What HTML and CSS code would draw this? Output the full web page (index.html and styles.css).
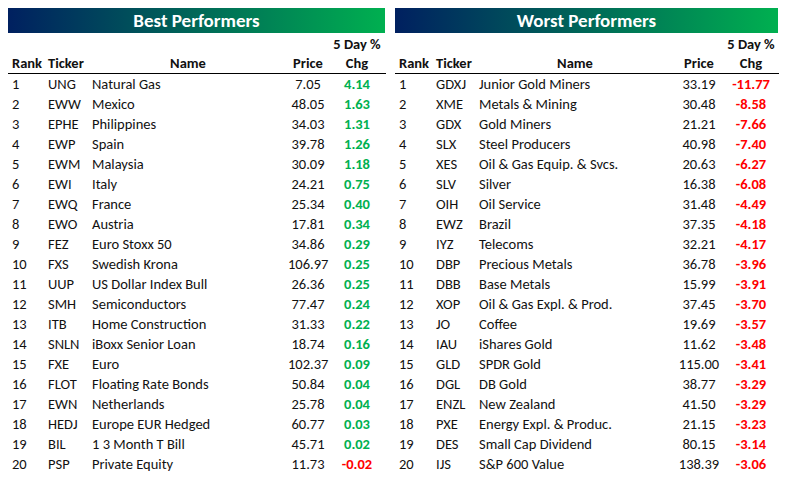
FILE: index.html
```html
<!DOCTYPE html>
<html>
<head>
<meta charset="utf-8">
<link rel="stylesheet" href="styles.css">
</head>
<body>
<div class="page">
  <section class="panel best">
    <h2 class="title">Best Performers</h2>
    <table class="tbl">
      <colgroup><col class="c-rank"><col class="c-tick"><col class="c-name"><col class="c-price"><col class="c-chg"></colgroup>
      <thead>
        <tr class="sup"><th></th><th></th><th></th><th></th><th class="chg">5 Day %</th></tr>
        <tr class="hdr"><th class="l">Rank</th><th class="l">Ticker</th><th>Name</th><th>Price</th><th>Chg</th></tr>
      </thead>
      <tbody>
        <tr><td>1</td><td>UNG</td><td>Natural Gas</td><td class="n">7.05</td><td class="up">4.14</td></tr>
        <tr><td>2</td><td>EWW</td><td>Mexico</td><td class="n">48.05</td><td class="up">1.63</td></tr>
        <tr><td>3</td><td>EPHE</td><td>Philippines</td><td class="n">34.03</td><td class="up">1.31</td></tr>
        <tr><td>4</td><td>EWP</td><td>Spain</td><td class="n">39.78</td><td class="up">1.26</td></tr>
        <tr><td>5</td><td>EWM</td><td>Malaysia</td><td class="n">30.09</td><td class="up">1.18</td></tr>
        <tr><td>6</td><td>EWI</td><td>Italy</td><td class="n">24.21</td><td class="up">0.75</td></tr>
        <tr><td>7</td><td>EWQ</td><td>France</td><td class="n">25.34</td><td class="up">0.40</td></tr>
        <tr><td>8</td><td>EWO</td><td>Austria</td><td class="n">17.81</td><td class="up">0.34</td></tr>
        <tr><td>9</td><td>FEZ</td><td>Euro Stoxx 50</td><td class="n">34.86</td><td class="up">0.29</td></tr>
        <tr><td>10</td><td>FXS</td><td>Swedish Krona</td><td class="n">106.97</td><td class="up">0.25</td></tr>
        <tr><td>11</td><td>UUP</td><td>US Dollar Index Bull</td><td class="n">26.36</td><td class="up">0.25</td></tr>
        <tr><td>12</td><td>SMH</td><td>Semiconductors</td><td class="n">77.47</td><td class="up">0.24</td></tr>
        <tr><td>13</td><td>ITB</td><td>Home Construction</td><td class="n">31.33</td><td class="up">0.22</td></tr>
        <tr><td>14</td><td>SNLN</td><td>iBoxx Senior Loan</td><td class="n">18.74</td><td class="up">0.16</td></tr>
        <tr><td>15</td><td>FXE</td><td>Euro</td><td class="n">102.37</td><td class="up">0.09</td></tr>
        <tr><td>16</td><td>FLOT</td><td>Floating Rate Bonds</td><td class="n">50.84</td><td class="up">0.04</td></tr>
        <tr><td>17</td><td>EWN</td><td>Netherlands</td><td class="n">25.78</td><td class="up">0.04</td></tr>
        <tr><td>18</td><td>HEDJ</td><td>Europe EUR Hedged</td><td class="n">60.77</td><td class="up">0.03</td></tr>
        <tr><td>19</td><td>BIL</td><td>1 3 Month T Bill</td><td class="n">45.71</td><td class="up">0.02</td></tr>
        <tr><td>20</td><td>PSP</td><td>Private Equity</td><td class="n">11.73</td><td class="dn">-0.02</td></tr>
      </tbody>
    </table>
  </section>
  <section class="panel worst">
    <h2 class="title">Worst Performers</h2>
    <table class="tbl">
      <colgroup><col class="c-rank"><col class="c-tick"><col class="c-name"><col class="c-price"><col class="c-chg"></colgroup>
      <thead>
        <tr class="sup"><th></th><th></th><th></th><th></th><th class="chg">5 Day %</th></tr>
        <tr class="hdr"><th class="l">Rank</th><th class="l">Ticker</th><th>Name</th><th>Price</th><th>Chg</th></tr>
      </thead>
      <tbody>
        <tr><td>1</td><td>GDXJ</td><td>Junior Gold Miners</td><td class="n">33.19</td><td class="dn">-11.77</td></tr>
        <tr><td>2</td><td>XME</td><td>Metals &amp; Mining</td><td class="n">30.48</td><td class="dn">-8.58</td></tr>
        <tr><td>3</td><td>GDX</td><td>Gold Miners</td><td class="n">21.21</td><td class="dn">-7.66</td></tr>
        <tr><td>4</td><td>SLX</td><td>Steel Producers</td><td class="n">40.98</td><td class="dn">-7.40</td></tr>
        <tr><td>5</td><td>XES</td><td>Oil &amp; Gas Equip. &amp; Svcs.</td><td class="n">20.63</td><td class="dn">-6.27</td></tr>
        <tr><td>6</td><td>SLV</td><td>Silver</td><td class="n">16.38</td><td class="dn">-6.08</td></tr>
        <tr><td>7</td><td>OIH</td><td>Oil Service</td><td class="n">31.48</td><td class="dn">-4.49</td></tr>
        <tr><td>8</td><td>EWZ</td><td>Brazil</td><td class="n">37.35</td><td class="dn">-4.18</td></tr>
        <tr><td>9</td><td>IYZ</td><td>Telecoms</td><td class="n">32.21</td><td class="dn">-4.17</td></tr>
        <tr><td>10</td><td>DBP</td><td>Precious Metals</td><td class="n">36.78</td><td class="dn">-3.96</td></tr>
        <tr><td>11</td><td>DBB</td><td>Base Metals</td><td class="n">15.99</td><td class="dn">-3.91</td></tr>
        <tr><td>12</td><td>XOP</td><td>Oil &amp; Gas Expl. &amp; Prod.</td><td class="n">37.45</td><td class="dn">-3.70</td></tr>
        <tr><td>13</td><td>JO</td><td>Coffee</td><td class="n">19.69</td><td class="dn">-3.57</td></tr>
        <tr><td>14</td><td>IAU</td><td>iShares Gold</td><td class="n">11.62</td><td class="dn">-3.48</td></tr>
        <tr><td>15</td><td>GLD</td><td>SPDR Gold</td><td class="n">115.00</td><td class="dn">-3.41</td></tr>
        <tr><td>16</td><td>DGL</td><td>DB Gold</td><td class="n">38.77</td><td class="dn">-3.29</td></tr>
        <tr><td>17</td><td>ENZL</td><td>New Zealand</td><td class="n">41.50</td><td class="dn">-3.29</td></tr>
        <tr><td>18</td><td>PXE</td><td>Energy Expl. &amp; Produc.</td><td class="n">21.15</td><td class="dn">-3.23</td></tr>
        <tr><td>19</td><td>DES</td><td>Small Cap Dividend</td><td class="n">80.15</td><td class="dn">-3.14</td></tr>
        <tr><td>20</td><td>IJS</td><td>S&amp;P 600 Value</td><td class="n">138.39</td><td class="dn">-3.06</td></tr>
      </tbody>
    </table>
  </section>
</div>
</body>
</html>
```
FILE: styles.css
```css
html, body {
  margin: 0;
  padding: 0;
  background: #ffffff;
}
body {
  font-family: Carlito, Calibri, Lato, "Liberation Sans", sans-serif;
  font-size: 14.5px;
  color: #111111;
}
.page {
  display: flex;
  gap: 9px;
  padding: 8px 0 0 8px;
}
.best { width: 378px; }
.worst { width: 384px; }
.title {
  margin: 0 1px 1px 0;
  height: 25px;
  line-height: 26px;
  text-align: center;
  color: #ffffff;
  font-size: 19px;
  font-weight: bold;
  background: linear-gradient(to right, #002060 0%, #00b050 100%);
}
.tbl {
  width: 100%;
  border-collapse: collapse;
  table-layout: fixed;
}
.tbl th, .tbl td {
  height: 20px;
  padding: 0 0 0 4px;
  white-space: nowrap;
  overflow: visible;
  line-height: 20px;
  vertical-align: middle;
}
.tbl th {
  font-weight: bold;
  text-align: center;
  padding: 0;
}
.tbl th.l { text-align: left; padding-left: 4px; }
.tbl td.n, .tbl td.up, .tbl td.dn { text-align: center; padding: 0; }
.hdr th {
  height: 19px;
  line-height: 19px;
  border-bottom: 1px solid #000000;
}
.up { color: #00b050; font-weight: bold; }
.dn { color: #ff0000; font-weight: bold; }

.best .c-rank { width: 36px; }
.best .c-tick { width: 44px; }
.best .c-name { width: 200px; }
.best .c-price { width: 40px; }
.best .c-chg { width: 58px; }

.worst .c-rank { width: 37px; }
.worst .c-tick { width: 43px; }
.worst .c-name { width: 200px; }
.worst .c-price { width: 48px; }
.worst .c-chg { width: 56px; }
```
